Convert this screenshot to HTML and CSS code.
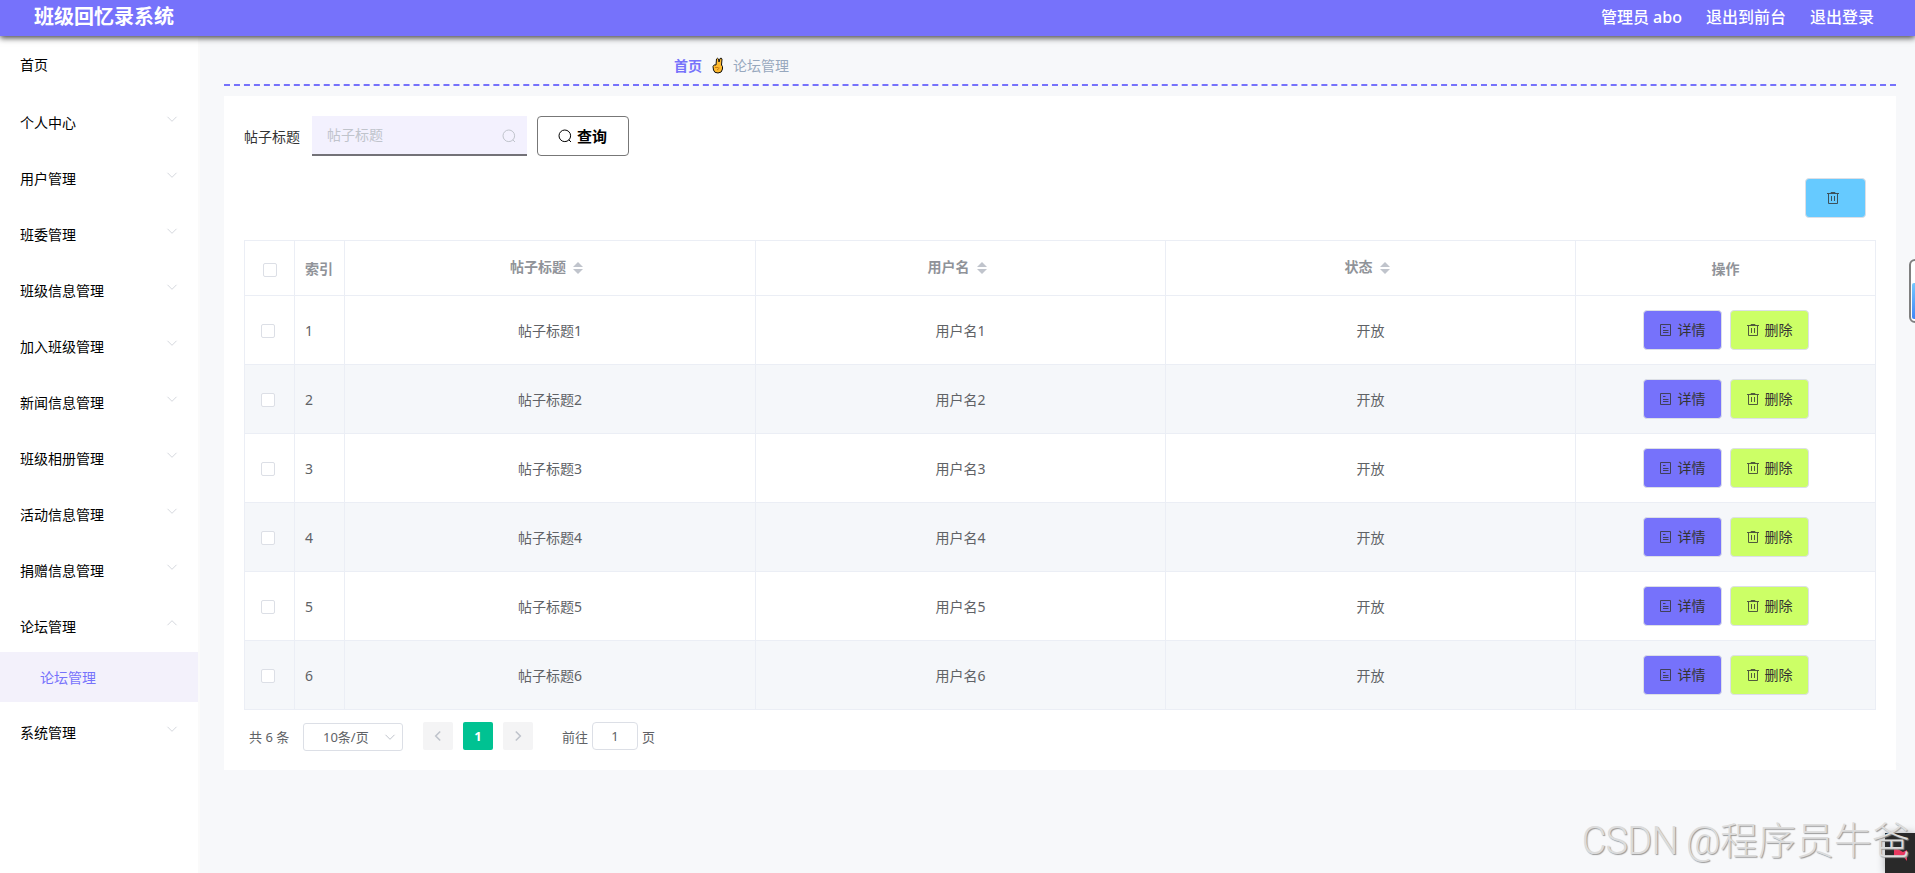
FILE: index.html
```html
<!DOCTYPE html>
<html lang="zh-CN">
<head>
    <meta charset="UTF-8">
    <meta name="viewport" content="width=device-width, initial-scale=1.0">
    <title>班级回忆录系统</title>
    <link rel="stylesheet" href="styles.css">
</head>
<body>
    <svg class="sprite" width="0" height="0">
        <symbol id="icon-down" viewBox="0 0 12 12"><path d="M1.500 3.800 6 8.300l4.500-4.500" fill="none" stroke="currentColor"/></symbol>
        <symbol id="icon-search" viewBox="0 0 14 14"><circle cx="6.800" cy="6.800" r="5.800" fill="none" stroke="currentColor"/><path d="m10.800 10.800 2.200 2.200" stroke="currentColor"/></symbol>
        <symbol id="icon-trash" viewBox="0 0 14 14"><path d="M1 2.500h12M2.500 2.500v10h9v-10M5 2.500v-1h4v1M5.500 5v5M8.500 5v5" fill="none" stroke="currentColor"/></symbol>
        <symbol id="icon-doc" viewBox="0 0 14 14"><path d="M1.500 1.500h10v11h-10zM4 4.500h2.500M4 7.500h5.500M4 9.500h5.500" fill="none" stroke="currentColor"/></symbol>
    </svg>

    <header class="header">
        <h1 class="title">班级回忆录系统</h1>
        <nav class="user-nav">
            <span>管理员 abo</span>
            <span>退出到前台</span>
            <span>退出登录</span>
        </nav>
    </header>

    <div class="layout">
        <aside class="sidebar">
            <ul class="menu" id="menu"></ul>
        </aside>

        <main class="main">
            <div class="breadcrumb">
                <b>首页</b>
                <span class="separator">
                    <svg width="12" height="17" viewBox="0 0 12 17">
                        <path d="M4 8 4.500 2q1-1.500 2 0L7 5l1-3.500q1.500-1 2 .5L9.500 8q1.500 1 1 4-.5 4-4.500 4T1.500 13L1 9.500Q2 7 4 8z" fill="#fdb92e" stroke="#111"/>
                        <path d="M3 10.500h3.500M5 13l2.500-2" fill="none" stroke="#c97a10"/>
                    </svg>
                </span>
                <span>论坛管理</span>
            </div>

            <section class="card">
                <div class="search-form">
                    <label>帖子标题</label>
                    <div class="search-input">
                        <span>帖子标题</span>
                        <svg class="icon"><use href="#icon-search"/></svg>
                    </div>
                    <button class="btn btn-search"><svg class="icon"><use href="#icon-search"/></svg><span>查询</span></button>
                </div>

                <div class="toolbar">
                    <button class="btn btn-batch"><svg class="icon"><use href="#icon-trash"/></svg></button>
                </div>

                <table class="table">
                    <colgroup>
                        <col class="col-check">
                        <col class="col-index">
                        <col class="col-title">
                        <col>
                        <col>
                        <col class="col-action">
                    </colgroup>
                    <thead>
                        <tr>
                            <th class="left check-head"><i class="checkbox"></i></th>
                            <th class="left">索引</th>
                            <th class="sortable">帖子标题<i class="caret"></i></th>
                            <th class="sortable">用户名<i class="caret"></i></th>
                            <th class="sortable">状态<i class="caret"></i></th>
                            <th>操作</th>
                        </tr>
                    </thead>
                    <tbody id="rows"></tbody>
                </table>

                <div class="pagination">
                    <span class="total">共 6 条</span>
                    <div class="page-size"><span>10条/页</span><svg class="icon"><use href="#icon-down"/></svg></div>
                    <button class="page"><svg class="icon prev"><use href="#icon-down"/></svg></button>
                    <button class="page current">1</button>
                    <button class="page"><svg class="icon next"><use href="#icon-down"/></svg></button>
                    <span class="jump">前往<span class="jump-input">1</span>页</span>
                </div>
            </section>
        </main>
    </div>

    <div class="side-widget"><div class="side-fill"></div></div>
    <div class="corner-widget">
        <svg width="30" height="40"><path d="M9 14v10l8-2 5 6V17l-4 2z" fill="#e8395f"/></svg>
    </div>
    <div class="watermark"><span class="latin">CSDN @</span>程序员牛爸</div>

    <script>
        const menuItems = ['首页', '个人中心', '用户管理', '班委管理', '班级信息管理', '加入班级管理',
            '新闻信息管理', '班级相册管理', '活动信息管理', '捐赠信息管理', '论坛管理', '系统管理'];

        document.getElementById('menu').innerHTML = menuItems.map((name, i) => {
            const open = name === '论坛管理';
            const arrow = i === 0 ? '' : `<svg class="icon arrow${open ? ' up' : ''}"><use href="#icon-down"/></svg>`;
            const child = open ? '<li class="submenu-item">论坛管理</li>' : '';
            return `<li class="menu-item${i === 0 ? ' home' : ''}"><span>${name}</span>${arrow}</li>${child}`;
        }).join('');

        document.getElementById('rows').innerHTML = [1, 2, 3, 4, 5, 6].map(n => `
            <tr>
                <td class="left check"><i class="checkbox"></i></td>
                <td class="left">${n}</td>
                <td>帖子标题${n}</td>
                <td>用户名${n}</td>
                <td>开放</td>
                <td>
                    <div class="actions">
                        <button class="btn btn-detail"><svg class="icon"><use href="#icon-doc"/></svg><span>详情</span></button>
                        <button class="btn btn-delete"><svg class="icon"><use href="#icon-trash"/></svg><span>删除</span></button>
                    </div>
                </td>
            </tr>`).join('');
    </script>
</body>
</html>
```
FILE: styles.css
```css
* {
    box-sizing: border-box;
}

body {
    margin: 0;
    height: 873px;
    overflow: hidden;
    font-family: "Noto Sans", "Noto Sans CJK SC", sans-serif;
    font-size: 14px;
    color: #606266;
    background: #f7f8fa;
}

.sprite {
    display: none;
}

.icon {
    width: 14px;
    height: 14px;
    flex: none;
}

.header {
    position: relative;
    z-index: 2;
    display: flex;
    justify-content: space-between;
    height: 36px;
    padding: 0 41px 0 34px;
    line-height: 34px;
    color: #fff;
    background: #7672fb;
    box-shadow: 0 2px 6px #444;
}

.title {
    margin: 0;
    font-size: 20px;
}

.user-nav {
    display: flex;
    gap: 24px;
    font-size: 16px;
    font-weight: 500;
}

.layout {
    display: flex;
    height: 837px;
}

.sidebar {
    width: 200px;
    background: #fff;
    border-right: 2px solid #fafafa;
}

.menu {
    margin: 0;
    padding: 0;
    list-style: none;
}

.menu-item {
    display: flex;
    justify-content: space-between;
    height: 56px;
    padding: 3px 20px 0;
    line-height: 56px;
    color: #000;
}

.menu-item.home {
    padding-top: 1px;
}

.arrow {
    width: 12px;
    height: 12px;
    margin-top: 18px;
    color: #d5d8de;
}

.arrow.up {
    transform: rotate(180deg);
}

.submenu-item {
    height: 50px;
    padding-left: 40px;
    line-height: 51px;
    color: #7672fb;
    background: #f3f1fb;
}

.main {
    flex: 1;
    padding: 0 19px 0 24px;
}

.breadcrumb {
    display: flex;
    align-items: center;
    height: 50px;
    padding: 10px 0 0 450px;
    color: #97a8be;
    border-bottom: 2px dashed #7672fb;
}

.breadcrumb b {
    color: #7672fb;
}

.separator {
    display: flex;
    justify-content: center;
    width: 31px;
}

.card {
    height: 674px;
    margin-top: 10px;
    padding: 20px;
    background: #fff;
}

.search-form {
    display: flex;
    align-items: center;
    height: 40px;
    color: #333;
}

.search-input {
    display: flex;
    align-items: center;
    justify-content: space-between;
    width: 215px;
    height: 40px;
    margin: 0 10px 0 12px;
    padding: 0 11px 0 15px;
    color: #c0c4cc;
    background: #f3f1fe;
    border-bottom: 2px solid #737278;
}

.search-input span {
    padding-bottom: 2px;
}

.search-input .icon {
    margin-top: 2px;
}

.btn {
    display: flex;
    align-items: center;
    gap: 5px;
    height: 40px;
    padding: 0 15px;
    font: inherit;
    color: #333;
    border: 1px solid #dcdfe6;
    border-radius: 4px;
}

.btn span {
    padding-bottom: 2px;
}

.btn-detail .icon,
.btn-delete .icon,
.btn-batch .icon {
    opacity: 0.8;
}

.btn-search {
    width: 92px;
    padding: 0 20px;
    font-size: 15px;
    font-weight: bold;
    color: #000;
    background: #fff;
    border-color: #777;
}

.toolbar {
    display: flex;
    justify-content: flex-end;
    height: 84px;
    padding: 22px 10px 0 0;
}

.btn-batch {
    width: 61px;
    padding: 0 20px;
    background: #66caff;
}

.table {
    width: 1632px;
    table-layout: fixed;
    border-collapse: collapse;
}

.col-check,
.col-index {
    width: 50px;
}

.col-title {
    width: 411px;
}

.col-action {
    width: 300px;
}

.table th,
.table td {
    padding: 0;
    text-align: center;
    border: 1px solid #ebeef5;
}

.table th {
    height: 55px;
    color: #909399;
}

.table td {
    height: 69px;
}

.table tbody tr:nth-child(even) {
    background: #f5f7fa;
}

.table .left {
    padding-left: 10px;
    text-align: left;
}

.table .check-head {
    padding-left: 18px;
}

.table .check {
    padding-top: 2px;
    padding-left: 16px;
}

.table .sortable {
    padding-bottom: 4px;
}

.checkbox {
    display: block;
    width: 14px;
    height: 14px;
    background: #fff;
    border: 1px solid #dcdfe6;
    border-radius: 2px;
}

.check-head .checkbox {
    margin-top: 3px;
}

.caret {
    display: inline-flex;
    flex-direction: column;
    gap: 2px;
    width: 10px;
    margin: 0 7px;
    vertical-align: middle;
}

.caret::before,
.caret::after {
    content: "";
    border: 5px solid transparent;
}

.caret::before {
    border-top: 0;
    border-bottom-color: #c0c4cc;
}

.caret::after {
    border-bottom: 0;
    border-top-color: #c0c4cc;
}

.actions {
    display: flex;
    justify-content: center;
    gap: 8px;
}

.btn-detail {
    background: #7672fb;
}

.btn-delete {
    background: #ccff66;
}

.pagination {
    display: flex;
    align-items: center;
    height: 28px;
    margin-top: 12px;
    padding-left: 5px;
    font-size: 13px;
}

.total {
    width: 54px;
}

.page-size {
    display: flex;
    align-items: center;
    justify-content: space-between;
    width: 100px;
    height: 28px;
    margin: 2px 20px 0 0;
    padding: 0 6px 0 19px;
    border: 1px solid #dcdfe6;
    border-radius: 3px;
}

.page-size span {
    padding-bottom: 2px;
}

.page-size .icon {
    width: 12px;
    height: 12px;
    color: #c0c4cc;
}

.page {
    display: flex;
    align-items: center;
    justify-content: center;
    width: 30px;
    height: 28px;
    margin-right: 10px;
    padding: 0;
    font: inherit;
    font-weight: bold;
    color: #c0c4cc;
    background: #f4f4f5;
    border: 0;
    border-radius: 2px;
}

.page.current {
    color: #fff;
    background: #00c292;
}

.page .icon {
    width: 12px;
    height: 12px;
    stroke-width: 1.6;
}

.prev {
    transform: rotate(90deg);
}

.next {
    transform: rotate(-90deg);
}

.jump {
    display: flex;
    align-items: center;
    margin-left: 19px;
}

.jump-input {
    width: 46px;
    height: 28px;
    margin: 0 4px;
    line-height: 26px;
    text-align: center;
    background: #fff;
    border: 1px solid #dcdfe6;
    border-radius: 4px;
}

/* floating widgets on the right edge */
.side-widget {
    position: absolute;
    top: 259px;
    right: -20px;
    width: 26px;
    height: 64px;
    padding: 22px 1px 2px;
    background: #fff;
    border: 2px solid #808080;
    border-radius: 6px;
}

.side-fill {
    height: 36px;
    background: linear-gradient(#73c8ff, #3f86f7);
    border-radius: 2px;
}

.corner-widget {
    position: absolute;
    right: 0;
    bottom: 0;
    width: 30px;
    height: 40px;
    background: #292929;
    box-shadow: 0 0 8px rgba(0, 0, 0, 0.3);
}

.watermark {
    position: absolute;
    right: 5px;
    bottom: 5px;
    font-family: Roboto, "Noto Sans CJK SC", sans-serif;
    font-size: 38px;
    font-weight: 300;
    line-height: 54px;
    white-space: nowrap;
    color: #dcdcdc;
    text-shadow: 1px 1px 1px #999;
}

.watermark .latin {
    letter-spacing: -0.8px;
}
```
